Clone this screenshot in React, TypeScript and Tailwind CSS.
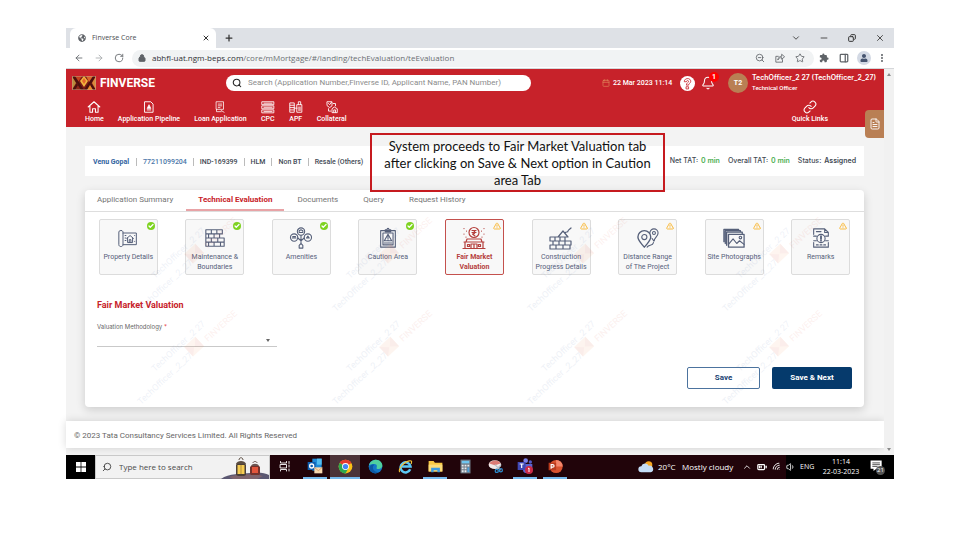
import React, { type ReactNode } from "react";
import {
  ArrowLeft, ArrowRight, BatteryMedium, Bell, Calendar, Check, ChevronDown, ChevronUp, Copy, FileText, Link, Lock, Minus,
  MoreVertical, PanelRight, Plus, RotateCw, Search, Star, TriangleAlert, Volume1, Wifi, X, ZoomOut,
} from "lucide-react";
import { FaGlobeAmericas, FaUser } from "react-icons/fa";
import { MdExtension } from "react-icons/md";

const ROBOTO = "font-['Roboto','Liberation_Sans',sans-serif]";
const INTER = "font-['Inter','Roboto',sans-serif]";
const SEGOE = "font-['Open_Sans','Noto_Sans',sans-serif]";

function Svg({ children, className = "size-5", box = 24 }: { children: ReactNode; className?: string; box?: number }) {
  return (
    <svg aria-hidden="true" viewBox={`0 0 ${box} ${box}`} className={className} fill="none" stroke="currentColor" strokeWidth="1.2" strokeLinecap="round" strokeLinejoin="round">
      {children}
    </svg>
  );
}

function BrandLogo() {
  return (
    <svg aria-hidden="true" viewBox="0 0 24 14" className="h-[14px] w-6">
      <rect width="24" height="14" fill="#7d1a17" />
      <path d="M0 0 4 7 0 14Z" fill="#b98b3b" />
      <path d="M2 0H10L6 6Z" fill="#c2401f" />
      <path d="M2 14H10L6 8Z" fill="#8e2418" />
      <path d="M0 0h3l9 14H9ZM0 14h3l3-5-1-2Z" fill="#4a100d" />
      <path d="M8 5 12 0l4 5-4 6Z" fill="#f0b53f" />
      <path d="M10 5 12 2l2 3-2 3Z" fill="#e4642a" />
      <path d="M24 0h-3l-9 14h3ZM24 14h-3l-3-5 1-2Z" fill="#4a100d" />
      <path d="M14 0h7l-4 6Z" fill="#d9652b" />
      <path d="M15 14h6l-3-5Z" fill="#e98a2b" />
      <path d="M24 0 20 7l4 7Z" fill="#d98a3b" />
      <rect x=".25" y=".25" width="23.5" height="13.5" fill="none" stroke="#c9a080" strokeWidth=".5" />
    </svg>
  );
}

function BrowserChrome() {
  return (
    <div className={`${SEGOE} text-[8px] text-[#5f6368]`}>
      <div className="flex h-5 items-stretch bg-[#dee1e6] pl-1">
        <div className="flex w-[146px] items-center rounded-t-md bg-white pr-1.5 pl-2">
          <FaGlobeAmericas className="size-2" />
          <span className="ml-1.5 flex-1 text-[7px] text-[#4a4d51]">Finverse Core</span>
          <button type="button" aria-label="Close tab"><X className="size-2 text-[#333]" strokeWidth={3} /></button>
        </div>
        <button type="button" aria-label="New tab" className="ml-2"><Plus className="size-2.5 text-[#333]" strokeWidth={3} /></button>
        <div className="ml-auto flex text-[#333]">
          <button type="button" aria-label="Search tabs" className="flex w-7 items-center justify-center"><ChevronDown className="size-2.5" /></button>
          <button type="button" aria-label="Minimize" className="flex w-7 items-center justify-center"><Minus className="size-2.5" /></button>
          <button type="button" aria-label="Restore" className="flex w-7 items-center justify-center"><Copy className="size-2 -scale-x-100" strokeWidth={3} /></button>
          <button type="button" aria-label="Close" className="flex w-7 items-center justify-center"><X className="size-2.5" /></button>
        </div>
      </div>
      <div className="flex h-[21px] items-center border-b border-[#d5d7da] bg-white pl-2">
        <button type="button" aria-label="Back" className="w-5"><ArrowLeft className="size-2.5" /></button>
        <button type="button" aria-label="Forward" className="w-5"><ArrowRight className="size-2.5 text-[#a5a8ab]" /></button>
        <button type="button" aria-label="Reload" className="w-[18px]"><RotateCw className="size-2.5" /></button>
        <div className="flex h-[17px] flex-1 items-center rounded-full bg-[#f1f3f4] pl-1.5">
          <Lock className="size-2 shrink-0 fill-[#5f6368]" strokeWidth={3} />
          <span className="ml-1.5 flex-1 text-[#6b6f73]">
            <span className="text-[#303134]">abhfl-uat.ngm-beps.com</span>/core/mMortgage/#/landing/techEvaluation/teEvaluation
          </span>
          <button type="button" aria-label="Zoom" className="flex w-5 justify-center"><ZoomOut className="size-2.5" /></button>
          <button type="button" aria-label="Share" className="flex w-5 justify-center">
            <Svg className="size-2.5"><path d="M8 8H2v14h16v-6M7 16c1-6 4-8 9-8V3l7 6-7 6v-4c-4 0-7 2-9 5Z" strokeWidth="2" /></Svg>
          </button>
          <button type="button" aria-label="Bookmark" className="mr-1 flex w-5 justify-center"><Star className="size-2.5" /></button>
        </div>
        <button type="button" aria-label="Extensions" className="flex w-5 justify-center"><MdExtension className="size-2.5" /></button>
        <button type="button" aria-label="Side panel" className="flex w-5 justify-center"><PanelRight className="size-2.5" strokeWidth={3} /></button>
        <button type="button" aria-label="Profile" className="flex w-5 justify-center">
          <span className="flex size-3.5 items-center justify-center rounded-full bg-[#d3d9e4]"><FaUser className="size-2 text-[#46546f]" /></span>
        </button>
        <button type="button" aria-label="Menu" className="mr-1 flex w-4 justify-center"><MoreVertical className="size-2.5" strokeWidth={3} /></button>
      </div>
    </div>
  );
}

const NAV: { label: string; icon: ReactNode }[] = [
  { label: "Home", icon: <Svg className="size-[14px]"><path d="M2 12 12 3l10 9M5 10v11h4.500v-6h5v6H19V10" strokeWidth="1.8" /></Svg> },
  { label: "Application Pipeline", icon: <Svg className="size-[14px]"><path d="M5 3h10l4 4v14H5Z M9 17h6" strokeWidth="1.600" /><path d="M9 14 12 8l3 6Z" fill="currentColor" /></Svg> },
  { label: "Loan Application", icon: <Svg className="size-[14px]"><path d="M6 3h12v13H6ZM9 7h6M9 10h6M9 13h3M6 16v4h8M14 18l5 3" strokeWidth="1.300" /></Svg> },
  { label: "CPC", icon: <Svg className="size-[14px]"><path d="M2 3h20v5H2ZM2 10h20v5H2ZM2 17h20v5H2ZM5 5.500h14M5 12.500h14M5 19.500h14" strokeWidth="1.500" /></Svg> },
  { label: "APF", icon: <Svg className="size-[14px]"><path d="M2 5h7v16H2ZM14 8h8v13h-8ZM16 8V3h4v5M2 9h7M2 13h7M2 17h7M9 14h5M17 12v6M19 12v6" strokeWidth="1.500" /></Svg> },
  { label: "Collateral", icon: <Svg className="size-[14px]"><path d="M4 3h8v7l-4 3-4-3ZM6 6l2 2 3-4M14 6h4v4M6 15v4h4M12 21v-6l4-3 5 3v6ZM15 21v-4h3v4" strokeWidth="1.500" /></Svg> },
];

function AppHeader() {
  return (
    <header className="relative bg-[#c7222a] text-white">
      <div className="flex h-7 items-center pl-[6px]">
        <BrandLogo />
        <span className="ml-1 w-[126px] text-[12px] font-bold">FINVERSE</span>
        <label className="flex h-4 w-[305px] items-center rounded-full bg-white pl-1.5">
          <Search className="size-2.5 text-[#222]" strokeWidth={2.500} />
          <input
            type="search"
            aria-label="Search applications"
            placeholder="Search (Application Number,Finverse ID, Applicant Name, PAN Number)"
            className="ml-1.5 min-w-0 flex-1 bg-transparent text-[8px] leading-4 text-[#333] outline-none placeholder:text-[#8c8c8c]"
          />
        </label>
        <div className="ml-auto flex items-center">
          <Calendar className="size-2 text-[#e08a5a]" />
          <time className="ml-[3px] w-[67px] text-[7px] font-medium">22 Mar 2023 11:14</time>
          <button type="button" aria-label="Help" className="flex size-[15px] items-center justify-center rounded-full bg-white text-[#c7222a]">
            <Svg className="size-[13px]"><path d="M6 8c0-7 12-7 12 0 0 4-4 3-4 7h-4c0-5 4-4 4-7 0-2-4-2-4 0ZM10 18h4v4h-4Z" strokeWidth="1.500" /></Svg>
          </button>
          <button type="button" aria-label="Notifications" className="relative ml-[6px]">
            <Bell className="size-[14px]" strokeWidth={1.800} />
            <span className="absolute -top-1 left-2 flex size-[10px] items-center justify-center rounded-full bg-[#f00] text-[7px] font-bold">1</span>
          </button>
          <span className="ml-[13px] flex size-5 items-center justify-center rounded-full bg-[#b97f54] text-[7px] font-bold">T2</span>
          <div className="ml-1 w-[132px] whitespace-nowrap">
            <p className={`${INTER} text-[7px] leading-[10px] font-semibold`}>TechOfficer_2 27 (TechOfficer_2_27)</p>
            <p className="text-[6px] leading-[10px] font-medium">Technical Officer</p>
          </div>
        </div>
      </div>
      <nav className="flex h-[30px] gap-[14px] pt-[3px] pr-[56px] pl-[19px] text-[7px] leading-[10px] font-medium">
        {NAV.map((item) => (
          <a key={item.label} href="#" className="flex flex-col items-center">
            {item.icon}
            {item.label}
          </a>
        ))}
        <a href="#" className="ml-auto flex flex-col items-center">
          <Link className="size-[14px]" strokeWidth={1.800} />
          Quick Links
        </a>
      </nav>
      <button type="button" aria-label="Notes" className="absolute top-[41px] right-0 flex h-7 w-[19px] items-center justify-center rounded-l-sm bg-[#b97f54]">
        <FileText className="size-3" strokeWidth={1.800} />
      </button>
    </header>
  );
}

function Callout() {
  return (
    <p className="absolute top-[6px] left-[304px] w-[295px] border-2 border-[#c61a1f] px-1 pt-[3px] pb-px text-center font-['Lato','Liberation_Sans',sans-serif] text-[13px] leading-[17px] text-[#111]">
      System proceeds to Fair Market Valuation tab after clicking on Save &amp; Next option in Caution area Tab
    </p>
  );
}

function ApplicantBar() {
  const facts = ["IND-169399", "HLM", "Non BT", "Resale (Others)"];
  return (
    <section className="flex h-[30px] items-center justify-between bg-white px-2 pt-px text-[7px] text-[#3f4a54]">
      <ul className="flex items-center leading-[8px]">
        <li className="pr-[7px] font-bold text-[#2f62a0]">Venu Gopal</li>
        <li className="border-l border-[#bbb] px-[6px] font-medium text-[#4a76a8]">77211099204</li>
        {facts.map((fact) => (
          <li key={fact} className="border-l border-[#bbb] px-[6px] font-medium">{fact}</li>
        ))}
      </ul>
      <dl className={`${INTER} flex gap-2 font-medium`}>
        <div className="flex gap-[3px]"><dt>Net TAT:</dt><dd className="font-semibold text-[#4caf50]">0 min</dd></div>
        <div className="flex gap-[3px]"><dt>Overall TAT:</dt><dd className="font-semibold text-[#4caf50]">0 min</dd></div>
        <div className="flex gap-[3px]"><dt>Status:</dt><dd className="font-semibold">Assigned</dd></div>
      </dl>
    </section>
  );
}

type Step = { label: string; state: "done" | "pending"; active?: boolean; icon: ReactNode };

const STEPS: Step[] = [
  {
    label: "Property Details", state: "done",
    icon: <Svg><path d="M6 6h16v14H6M4 3C1 3 1 4 1 6v14c0 3 5 3 5 0V5c0-1-1-2-2-2ZM10.500 12.500 14.500 9l4 3.500M11.500 12v5.500h6V12M13.500 17.500V14h2v3.500M8.500 9h1M8.500 12h1M8.500 15h1M20 9v.1M20 16v.1" /></Svg>,
  },
  {
    label: "Maintenance & Boundaries", state: "done",
    icon: <Svg className="size-[22px]"><path d="M2 3h18v4.500H2ZM2 7.500h15V12H2ZM2 12h20v4.500H2ZM2 16.500h20V21H2ZM8 3v4.500M14 3v4.500M5 7.500V12M11 7.500V12M8 12v4.500M15 12v4.500M5 16.500V21M11 16.500V21M18 16.500V21" /></Svg>,
  },
  {
    label: "Amenities", state: "done",
    icon: <Svg className="h-[22px] w-6"><circle cx="12" cy="5" r="4" /><circle cx="4.500" cy="11.500" r="4" /><circle cx="19.500" cy="11.500" r="4" /><path d="M10 6V4l2-1 2 1v2ZM2.500 12h4M3 10.500h3M18 12h3l-1.500-2ZM12 9v9M8.500 12l3.500 3 3.500-3M10 20l2-2 2 2v3h-4Z" /></Svg>,
  },
  {
    label: "Caution Area", state: "done",
    icon: <Svg className="size-[22px]"><path d="M4 4h16v18H4ZM6.500 6.500h11v13h-11ZM9 5V3h2c0-2 2-2 2 0h2v2ZM12 8l4 7H8ZM12 10.500v2M12 14v.1M8 17.500h8" /></Svg>,
  },
  {
    label: "Fair Market Valuation", state: "pending", active: true,
    icon: <Svg className="size-6"><circle cx="12" cy="6.500" r="5" /><path d="M10 4.500h4M10 6.500h4M10.500 4.500c3 0 3 3.500 0 3.500l2.500 2M5 13h14l1 3H4ZM2 16h20M3 16v6M21 16v6M1 22.500h22M9 22v-4h6v4M12 18v4M5.500 18.500h2v2h-2ZM16.500 18.500h2v2h-2ZM2 2.500v.1M4.500 5v.1M2 8v.1M4 11v.1M22 2.500v.1M19.500 5v.1M22 8v.1M20 11v.1" /></Svg>,
  },
  {
    label: "Construction Progress Details", state: "pending",
    icon: <Svg className="size-6"><path d="M1 11h15v4H1ZM4 15h18v4H4ZM1 19h20v4H1ZM6 11v4M11 11v4M10 15v4M16 15v4M7 19v4M14 19v4M9 11l5-6 5 6ZM16 7c1-2 3 0 3-2 0-1 2-2 3-3" /></Svg>,
  },
  {
    label: "Distance Range of The Project", state: "pending",
    icon: <Svg className="size-[22px]"><path d="M8 22c-4-5-7-7-7-11a7 7 0 0 1 14 0c0 4-3 6-7 11Z" strokeWidth="1.500" /><circle cx="8" cy="11" r="2.800" /><path d="M14 6.500a4.500 4.500 0 1 1 9 0c0 4-4 5-4.500 9l-2-3M18 17c-1 4-5 2-7 5" /><circle cx="18.500" cy="6.500" r="1.600" /></Svg>,
  },
  {
    label: "Site Photographs", state: "pending",
    icon: <Svg className="size-[22px]"><path d="M6 8h17v14H6ZM4 20V5.500h17V8M2.500 18V4H19v1.500M1 16V2.500h16V4" strokeWidth="1.400" /><path d="m6 19 5-6 4 5 3-3 5 4" /><circle cx="19" cy="11.500" r="1.400" /></Svg>,
  },
  {
    label: "Remarks", state: "pending",
    icon: <Svg className="size-[22px]"><path d="M4 8V2h12l4 4v4M4 17v5h16v-5M16 2v4h4M7 5h5M7 19.500h2M11 19.500h2M15 19.500h2M4 10h3M4 15h3M17 10h3M17 15h3" /><circle cx="12" cy="12.500" r="4.500" /><path d="M12 10v3M12 15v.1" strokeWidth="2" /></Svg>,
  },
];

function StepTile({ step }: { step: Step }) {
  const tone = step.active ? "border-[#c4514d] font-bold text-[#b5403d]" : "border-[#dcdcdc] text-[#56607a]";
  return (
    <button type="button" className={`relative flex h-14 w-[59px] flex-col items-center rounded-xs border bg-[#f8f8f8] pt-2 text-[7px] leading-[10px] ${tone}`}>
      <span className="mb-1 flex h-5 items-center">{step.icon}</span>
      <span className="w-[55px]">{step.label}</span>
      {step.state === "done" ? (
        <span className="absolute top-0.5 right-0.5 flex size-2 items-center justify-center rounded-full bg-[#7ed321]">
          <Check className="size-1.5 text-white" strokeWidth={5} />
        </span>
      ) : (
        <TriangleAlert className="absolute top-0.5 right-0.5 size-2 text-[#f9bd45]" strokeWidth={3} />
      )}
    </button>
  );
}

function Watermark() {
  const cells = [0, 1].flatMap((row) => [0, 1, 2, 3].map((col) => ({ row, col })));
  return (
    <svg aria-hidden="true" className="pointer-events-none absolute inset-0 size-full overflow-hidden opacity-10" fontFamily="Roboto, sans-serif" fontSize="9">
      {cells.map(({ row, col }) => (
        <g key={`${row}-${col}`} transform={`translate(${col * 195} ${row * 93})`}>
          <text transform="translate(70 67) rotate(-43)" fill="#5673ad">TechOfficer _2 27</text>
          <text transform="translate(56 100) rotate(-43)" fill="#5673ad">TechOfficer _2_27</text>
          <g transform="translate(104 47) rotate(-43)">
            <path d="M0-7h15V6H0Z" fill="#f0a06a" />
            <path d="M0-7 7 0 0 6ZM15-7 8 0l7 6Z" fill="#d9553a" />
          </g>
          <text transform="translate(123 37) rotate(-43)" fill="#dd6a5a">FINVERSE</text>
        </g>
      ))}
    </svg>
  );
}

function EvaluationCard() {
  const tabs = ["Application Summary", "Technical Evaluation", "Documents", "Query", "Request History"];
  return (
    <section className="mt-[14px] overflow-hidden rounded-sm bg-white shadow-[0_3px_10px_rgba(0,0,0,0.16)]">
      <div role="tablist" className="flex h-[22px] gap-px border-b border-[#dedede] text-[8px]">
        {tabs.map((tab) => (
          <button
            key={tab}
            type="button"
            role="tab"
            aria-selected={tab === "Technical Evaluation"}
            className={
              tab === "Technical Evaluation"
                ? "border-b-2 border-[#e8a3a6] px-3 font-bold text-[#c7222a]"
                : "border-b-2 border-transparent px-3 text-[#757575]"
            }
          >
            {tab}
          </button>
        ))}
      </div>
      <div className="relative pt-[7px] pb-[18px]">
        <div className="grid grid-cols-9 justify-items-center">
          {STEPS.map((step) => <StepTile key={step.label} step={step} />)}
        </div>
        <div className="px-3">
          <h2 className="mt-6 text-[9px] leading-3 font-bold text-[#c7222a]">Fair Market Valuation</h2>
          <label htmlFor="methodology" className={`${INTER} mt-[11px] block text-[6px] leading-[9px] text-[#666]`}>
            Valuation Methodology <span className="text-[#e53935]">*</span>
          </label>
          <div className="relative w-[180px]">
            <select id="methodology" defaultValue="" className="block h-4 w-full appearance-none border-b border-[#c9c9c9] bg-transparent text-[7px] outline-none">
              <option value=""></option>
            </select>
            <span className="pointer-events-none absolute top-2 right-[7px] border-x-2 border-t-[3px] border-x-transparent border-t-[#666]" />
          </div>
          <div className="mt-5 flex justify-end gap-3 text-[8px] font-bold">
            <button type="button" className="h-[22px] w-[73px] rounded-xs border border-[#4c739e] text-[#1a4473]">Save</button>
            <button type="button" className="h-[22px] w-20 rounded-xs bg-[#063a6c] text-white">Save &amp; Next</button>
          </div>
        </div>
        <Watermark />
      </div>
    </section>
  );
}

const APPS: { name: string; running?: boolean; current?: boolean; icon: ReactNode }[] = [
  { name: "Task View", icon: <Svg className="size-3 text-white"><path d="M3 3v3h12V3M3 9h12v7H3ZM3 22v-3h12v3M20 3v4M20 18v4M20 10v4" strokeWidth="1.800" /></Svg> },
  {
    name: "Outlook", running: true,
    icon: <svg viewBox="0 0 24 24" className="size-4"><path d="M8 1h14v18H8Z" fill="#1e8bd8" /><path d="M15 1h7v9h-7Z" fill="#50bdf0" /><path d="M1 6h12v12H1Z" fill="#0f5fb0" /><circle cx="7" cy="12" r="3" fill="none" stroke="#fff" strokeWidth="2" /><path d="M11 14h12v9H11Z" fill="#f7d8b0" /><path d="m11 14 6 5 6-5" fill="none" stroke="#c98a4c" /></svg>,
  },
  {
    name: "Chrome", running: true, current: true,
    icon: <svg viewBox="0 0 24 24" className="size-[15px]"><circle cx="12" cy="12" r="11" fill="#fbc116" /><path d="M12 12 2.500 6.500A11 11 0 0 1 21.500 6.500Z" fill="#e33b2e" /><path d="M12 12 2.500 6.500A11 11 0 0 0 12 23l4-7Z" fill="#2da94f" /><circle cx="12" cy="12" r="5.500" fill="#fff" /><circle cx="12" cy="12" r="4.200" fill="#4285f4" /></svg>,
  },
  {
    name: "Edge",
    icon: <svg viewBox="0 0 24 24" className="size-[15px]"><circle cx="12" cy="12" r="11" fill="#1478c8" /><path d="M1.500 10C3 3 9 1 13 1c6 0 10 5 10 9 0 4-3 6-6 6-3 0-4-1-3-3 1-3-1-5-4-5-4 0-7 1-8.500 2Z" fill="#4fd0a0" /><path d="M8 12c-1 5 3 9 9 9-6 4-14 0-15-6 0-4 4-7 8-6-1 1-2 2-2 3Z" fill="#0c59a4" /></svg>,
  },
  {
    name: "Internet Explorer",
    icon: <svg viewBox="0 0 24 24" className="size-[15px]" fill="none"><path d="M19.500 16.500A8 8 0 1 1 20 12H6" stroke="#5cc8f5" strokeWidth="4" /><path d="M3 21C-1 18 8 5 18 3c5-1 4 2 3 5" stroke="#f4c53a" strokeWidth="1.800" /></svg>,
  },
  {
    name: "File Explorer", running: true,
    icon: <svg viewBox="0 0 24 24" className="size-[15px]"><path d="M1 3h8l2 3h12v14H1Z" fill="#f8c843" /><path d="M1 9h22v11H1Z" fill="#fbdc7a" /><path d="M5 14h14v7h-4v-3H9v3H5Z" fill="#3d9be0" /></svg>,
  },
  {
    name: "Calculator",
    icon: <svg viewBox="0 0 24 24" className="size-[15px]"><path d="M4 1h16v22H4Z" fill="#707b87" /><path d="M6 3h12v4H6Z" fill="#6fc6f0" /><path d="M6 9h3v3H6ZM10.500 9h3v3h-3ZM15 9h3v3h-3ZM6 13.500h3v3H6ZM10.500 13.500h3v3h-3ZM6 18h3v3H6ZM10.500 18h3v3h-3Z" fill="#e6eaee" /><path d="M15 13.500h3V21h-3Z" fill="#4fa3dd" /></svg>,
  },
  {
    name: "Snipping Tool",
    icon: <svg viewBox="0 0 24 24" className="size-[15px]"><ellipse cx="11" cy="9" rx="10" ry="7" fill="#f1e9e9" /><path d="M2 7c5-6 15-6 18 0l-9 3Z" fill="#d24b45" opacity=".7" /><path d="m11 9 9 9M21 9l-8 8" stroke="#b9c3cc" strokeWidth="2" /><circle cx="14" cy="19" r="2.500" fill="none" stroke="#2f8fd0" strokeWidth="2" /><circle cx="20.500" cy="18" r="2.500" fill="none" stroke="#2f8fd0" strokeWidth="2" /></svg>,
  },
  {
    name: "Teams", running: true,
    icon: <svg viewBox="0 0 24 24" className="size-4"><circle cx="13" cy="4" r="3.500" fill="#7b83eb" /><circle cx="20" cy="6" r="2.500" fill="#5059c9" /><path d="M9 9h14v9a7 5 0 0 1-14 0Z" fill="#5b63d0" /><path d="M1 6h12v12H1Z" fill="#4048b5" /><path d="M4 9h6M7 9v6" stroke="#fff" strokeWidth="1.800" /><circle cx="18" cy="18" r="6" fill="#cb2b47" /><path d="m16.500 16 1.500-1v6" stroke="#fff" strokeWidth="1.500" fill="none" /></svg>,
  },
  {
    name: "PowerPoint", running: true,
    icon: <svg viewBox="0 0 24 24" className="size-[15px]"><circle cx="13" cy="12" r="10.500" fill="#d9532f" /><path d="M13 1.500A10.500 10.500 0 0 1 23.500 12H13Z" fill="#f5866a" /><path d="M1 6h12v12H1Z" fill="#b93a1c" /><path d="M5 15.500V9h2.500c3 0 3 4 0 4H5" stroke="#fff" strokeWidth="1.800" fill="none" /></svg>,
  },
];

function Lanterns() {
  return (
    <svg aria-hidden="true" viewBox="0 0 48 24" className="h-6 w-12">
      <path d="M0 24C8 18 20 19 30 18c8-1 14 0 18 2v4Z" fill="#5b5872" />
      <path d="M8 22c6-3 22-4 34-1l-6 3H12Z" fill="#8d6a6b" opacity=".7" />
      <path d="M16 8h8l1 2v10l-2 1h-6l-2-1V10Z" fill="#4c4038" /><path d="M16.500 10h7v9h-7Z" fill="#f7cd52" /><path d="M20 10v9" stroke="#8a6a30" strokeWidth=".6" />
      <path d="M15 9c1-4 9-4 10 0Z" fill="#5b4d42" /><path d="M18 5c0-3 4-3 4 0" stroke="#5b4d42" fill="none" />
      <path d="M30 11h8l1 1v7l-1 1h-8l-1-1v-7Z" fill="#74322c" /><path d="M31 12h6v6h-6Z" fill="#e2553c" /><path d="M30 11c1-3 7-3 8 0Z" fill="#6b5450" /><path d="M32 8c0-2 4-2 4 0" stroke="#6b5450" fill="none" />
    </svg>
  );
}

function Taskbar() {
  return (
    <footer className={`${SEGOE} flex h-6 items-stretch bg-[#21040a] text-[8px] text-white`}>
      <button type="button" aria-label="Start" className="flex w-[29px] items-center justify-center bg-black">
        <svg viewBox="0 0 10 10" className="size-2.5" fill="#fff"><path d="M0 0h4.600v4.600H0ZM5.400 0H10v4.600H5.400ZM0 5.400h4.600V10H0ZM5.400 5.400H10V10H5.400Z" /></svg>
      </button>
      <label className="flex w-[175px] items-center border border-[#c9c9c9] bg-[#f2f2f2] pl-1.5 text-[#333]">
        <Search className="size-2.5 -scale-x-100" />
        <input type="text" aria-label="Type here to search" placeholder="Type here to search" className="ml-[7px] w-[102px] min-w-0 bg-transparent outline-none placeholder:text-[#4a4a4a]" />
        <Lanterns />
      </label>
      {APPS.map((app) => (
        <button
          key={app.name}
          type="button"
          aria-label={app.name}
          className={`flex w-[30px] flex-col items-center justify-between ${app.current ? "bg-[#4b3338]" : ""}`}
        >
          <span className="flex h-[22px] items-center">{app.icon}</span>
          {app.running && <span className={`h-0.5 bg-[#76b9ed] ${app.current ? "w-full" : "w-6"}`} />}
        </button>
      ))}
      <div className="ml-auto flex items-center whitespace-nowrap">
        <svg aria-hidden="true" viewBox="0 0 24 18" className="h-3 w-4"><circle cx="16" cy="6" r="5.500" fill="#f6a623" /><path d="M5 17a4.500 4.500 0 0 1 0-9 6 6 0 0 1 11-1 5 5 0 0 1 3 10Z" fill="#c4dcf6" /></svg>
        <span className="ml-1 w-6">20°C</span>
        <span className="w-[60px]">Mostly cloudy</span>
        <span className="flex items-center gap-[5px]">
          <ChevronUp className="size-2.5" />
          <BatteryMedium className="size-2.5" strokeWidth={3} />
          <Wifi className="size-2.5 -rotate-45" />
        </span>
      </div>
      <div className="ml-1 flex items-center bg-black">
        <Volume1 className="size-2.5" />
        <span className="ml-1 w-[18px] text-[7px]">ENG</span>
        <time className="w-[46px] text-center text-[7px] leading-[10px]">11:14<br />22-03-2023</time>
        <button type="button" aria-label="Notifications" className="relative mr-2.5 ml-1.5">
          <svg viewBox="0 0 24 24" className="size-3.5"><path d="M1 1h19v14h-9l-5 4v-4H1Z" fill="#fff" /><path d="M4 5h13M4 8h13M4 11h9" stroke="#222" strokeWidth="1.300" /></svg>
          <span className="absolute top-1.5 left-1.5 flex size-[9px] items-center justify-center rounded-full bg-[#555] text-[6px]">21</span>
        </button>
      </div>
    </footer>
  );
}

export default function App() {
  return (
    <div className={`min-h-screen bg-white px-[66px] pt-7 ${ROBOTO}`}>
      <BrowserChrome />
      <div className="flex">
        <div className="min-w-0 flex-1 bg-[#f3f3f3]">
          <AppHeader />
          <main className="relative pt-[19px] pr-5 pb-[14px] pl-[19px]">
            <ApplicantBar />
            <EvaluationCard />
            <Callout />
          </main>
          <div className="bg-white px-2 pt-[2px] text-[8px] leading-[25px] text-[#666] shadow-[0_0_8px_rgba(0,0,0,0.15)]">© 2023 Tata Consultancy Services Limited. All Rights Reserved</div>
          <div className="h-[7px]" />
        </div>
        <div className="flex w-[10px] flex-col items-center justify-between bg-[#f1f1f1] py-1">
          <span className="border-x-2 border-b-[3px] border-x-transparent border-b-[#8a8a8a]" />
          <span className="border-x-2 border-t-[3px] border-x-transparent border-t-[#8a8a8a]" />
        </div>
      </div>
      <Taskbar />
    </div>
  );
}
